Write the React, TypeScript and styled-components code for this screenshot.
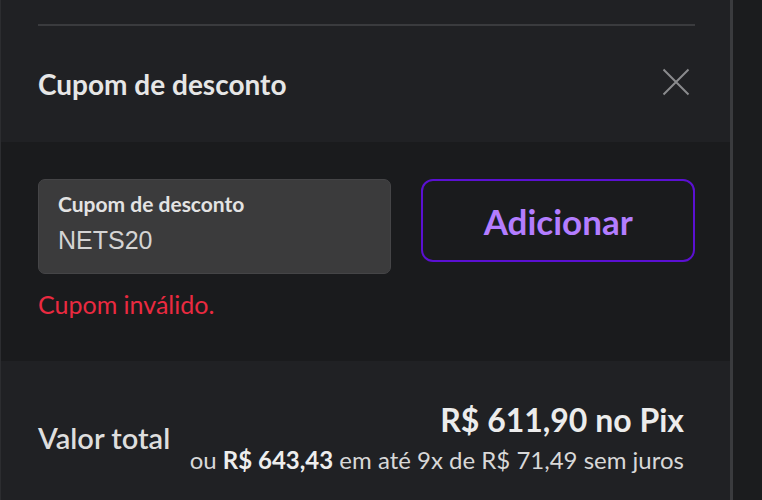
import React from "react";
import styled, { createGlobalStyle } from "styled-components";

const Global = createGlobalStyle`
  html, body { margin: 0; padding: 0; background: #1b1c1e; }
  body { font-family: Lato, "Noto Sans", sans-serif; }
  * { box-sizing: border-box; }
`;

const Page = styled.div`
  width: 762px;
  height: 500px;
  display: flex;
  background: #1b1c1e;
  overflow: hidden;
`;

const Panel = styled.div`
  width: 733px;
  flex: none;
  display: flex;
  flex-direction: column;
  border-left: 1px solid #2c2d30;
  border-right: 3px solid #3a3b3e;
`;

const Section = styled.div<{ $dark?: boolean; $grow?: boolean }>`
  background: ${(p) => (p.$dark ? "#1a1b1d" : "#202124")};
  padding: 0 35px 0 37px;
  flex: ${(p) => (p.$grow ? 1 : "none")};
`;

const Divider = styled.div`
  height: 2px;
  margin-top: 24px;
  background: #3a3b3e;
`;

const HeaderRow = styled.div`
  display: flex;
  align-items: center;
  justify-content: space-between;
  height: 116px;
`;

const Title = styled.h2`
  margin: 0 0 1px;
  font-size: 28px;
  line-height: 34px;
  font-weight: 700;
  color: #e6e6e6;
`;

const CloseBtn = styled.button`
  background: none;
  border: 0;
  padding: 0;
  margin: 0 5px 4px 0;
  width: 28px;
  height: 28px;
  display: flex;
  align-items: center;
  justify-content: center;
  cursor: pointer;
`;

const CouponBody = styled.div`
  padding: 37px 0 42px;
  display: flex;
  flex-direction: column;
  gap: 15px;
`;

const FormRow = styled.div`
  display: flex;
  gap: 30px;
  align-items: flex-start;
`;

const Field = styled.label`
  width: 354px;
  height: 95px;
  background: #3b3b3c;
  border: 1px solid #454547;
  border-radius: 7px;
  padding: 11px 19px 0;
  display: flex;
  flex-direction: column;
  gap: 10px;
`;

const FieldLabel = styled.span`
  font-size: 21px;
  line-height: 25px;
  font-weight: 700;
  color: #e3e3e3;
`;

const FieldValue = styled.span`
  font-family: "Liberation Sans", Arial, sans-serif;
  font-size: 25px;
  line-height: 29px;
  color: #d4d4d4;
`;

const AddButton = styled.button`
  width: 274px;
  height: 83px;
  background: transparent;
  border: 2px solid #5b10d2;
  border-radius: 12px;
  font-family: Lato, "Noto Sans", sans-serif;
  font-size: 35px;
  font-weight: 700;
  color: #b37dff;
  cursor: pointer;
`;

const ErrorText = styled.span`
  font-size: 25px;
  line-height: 30px;
  color: #ea2a40;
`;

const TotalRow = styled.div`
  display: flex;
  align-items: center;
  justify-content: space-between;
  padding: 40px 11px 0 0;
`;

const TotalLabel = styled.span`
  font-size: 29px;
  line-height: 34px;
  font-weight: 600;
  color: #dedede;
`;

const Prices = styled.div`
  display: flex;
  flex-direction: column;
  align-items: flex-end;
  gap: 6px;
`;

const PixPrice = styled.span`
  font-size: 32px;
  line-height: 38px;
  font-weight: 700;
  color: #ececec;
`;

const Installments = styled.span`
  font-size: 24px;
  line-height: 29px;
  color: #d8d8d8;
  b { font-weight: 700; color: #eeeeee; }
`;

export default function App() {
  return (
    <>
      <Global />
      <Page>
        <Panel>
          <Section>
            <Divider />
            <HeaderRow>
              <Title>Cupom de desconto</Title>
              <CloseBtn aria-label="Fechar">
                <svg width="28" height="28" viewBox="0 0 28 28">
                  <path d="M1.5 1.5L26.5 26.5M26.5 1.5L1.5 26.5" stroke="#8a8b8d" strokeWidth="2" />
                </svg>
              </CloseBtn>
            </HeaderRow>
          </Section>
          <Section $dark>
            <CouponBody>
              <FormRow>
                <Field>
                  <FieldLabel>Cupom de desconto</FieldLabel>
                  <FieldValue>NETS20</FieldValue>
                </Field>
                <AddButton>Adicionar</AddButton>
              </FormRow>
              <ErrorText>Cupom inválido.</ErrorText>
            </CouponBody>
          </Section>
          <Section $grow>
            <TotalRow>
              <TotalLabel>Valor total</TotalLabel>
              <Prices>
                <PixPrice>R$ 611,90 no Pix</PixPrice>
                <Installments>
                  ou <b>R$ 643,43</b> em até 9x de R$ 71,49 sem juros
                </Installments>
              </Prices>
            </TotalRow>
          </Section>
        </Panel>
      </Page>
    </>
  );
}
